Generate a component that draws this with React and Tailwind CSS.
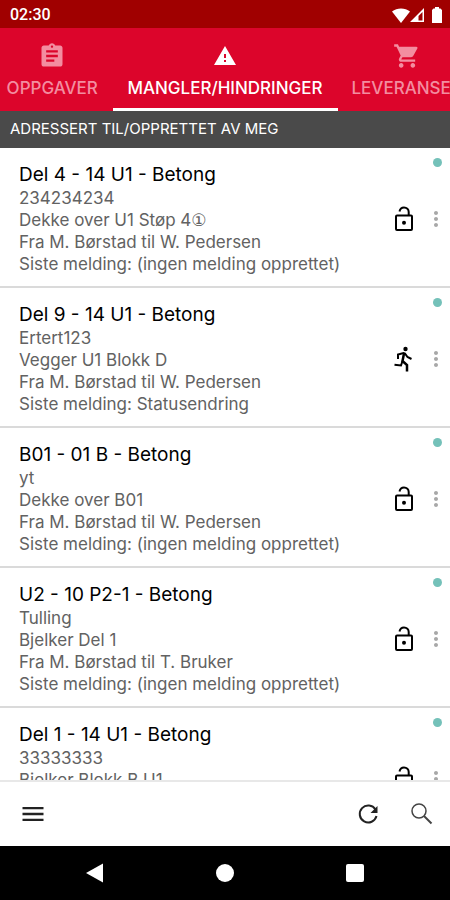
import { MdAssignment, MdWarning, MdShoppingCart, MdMoreVert, MdMenu } from 'react-icons/md'

const TABS = [
  { id: 'tasks', label: 'OPPGAVER', icon: MdAssignment, width: 'w-1/4 pr-2', iconSize: 'h-7 w-7' },
  { id: 'issues', label: 'MANGLER/HINDRINGER', icon: MdWarning, width: 'w-1/2', iconSize: 'h-6 w-6' },
  { id: 'deliveries', label: 'LEVERANSER', icon: MdShoppingCart, width: 'px-3.5', iconSize: 'h-7 w-7' },
]

const ISSUES = [
  {
    title: 'Del 4 - 14 U1 - Betong',
    status: 'open',
    lines: [
      '234234234',
      <>Dekke over U1 Støp 4<span className="font-['DejaVu_Sans'] leading-none">①</span></>,
      'Fra M. Børstad til W. Pedersen',
      'Siste melding: (ingen melding opprettet)',
    ],
  },
  {
    title: 'Del 9 - 14 U1 - Betong',
    status: 'running',
    lines: ['Ertert123', 'Vegger U1 Blokk D', 'Fra M. Børstad til W. Pedersen', 'Siste melding: Statusendring'],
  },
  {
    title: 'B01 - 01 B - Betong',
    status: 'open',
    lines: ['yt', 'Dekke over B01', 'Fra M. Børstad til W. Pedersen', 'Siste melding: (ingen melding opprettet)'],
  },
  {
    title: 'U2 - 10 P2-1 - Betong',
    status: 'open',
    lines: ['Tulling', 'Bjelker Del 1', 'Fra M. Børstad til T. Bruker', 'Siste melding: (ingen melding opprettet)'],
  },
  {
    title: 'Del 1 - 14 U1 - Betong',
    status: 'open',
    lines: ['33333333', 'Bjelker Blokk B U1'],
  },
]

function UnlockIcon() {
  return (
    <svg viewBox="0 0 24 28" className="h-7 w-6" fill="none" stroke="currentColor" strokeWidth="2">
      <rect x="4" y="10.5" width="16" height="14.5" rx="1" />
      <path d="M7.500 6.500C8 4 9.800 2.500 12 2.500c2.700 0 4.700 2 4.700 4.500v3.500" />
      <circle cx="12" cy="17.700" r="2" fill="currentColor" stroke="none" />
    </svg>
  )
}

function RunnerIcon() {
  return (
    <svg viewBox="0 0 24 28" className="h-7 w-6" fill="none" stroke="currentColor" strokeWidth="2">
      <circle cx="13.500" cy="4" r="2.200" fill="currentColor" stroke="none" />
      <path d="M6 14V9.500l5.500-1.500 1.500.5 2.500 3.500 4 2" />
      <path d="M12 8.500L10.500 16l4.500 4v6.500" strokeWidth="2.500" />
      <path d="M10.500 16L9 20.500l-6.500-.8" />
    </svg>
  )
}

function RefreshIcon() {
  return (
    <svg viewBox="0 0 24 24" className="h-6 w-6" fill="none" stroke="currentColor" strokeWidth="2">
      <path d="M19.500 7.500A8.500 8.500 0 1 0 20.500 14" />
      <path d="M21.500 4v7h-7z" fill="currentColor" stroke="none" />
    </svg>
  )
}

function SearchIcon() {
  return (
    <svg viewBox="0 0 24 24" className="h-6 w-6" fill="none" stroke="currentColor">
      <circle cx="9" cy="9" r="7" strokeWidth="1.500" />
      <path d="M14 14l7.500 7.500" strokeWidth="2" />
    </svg>
  )
}

function StatusBar() {
  return (
    <div className="flex h-7 shrink-0 items-center justify-between bg-[#a00000] pt-0.5 pr-2 pl-2.5 text-white">
      <span className="font-[Roboto] text-base font-medium">02:30</span>
      <div className="flex items-center" aria-hidden="true">
        <svg viewBox="0 0 18 15" className="h-[15px] w-[18px]" fill="currentColor">
          <path d="M0 3.500C5 -.6 13 -.6 18 3.500L9 15z" />
        </svg>
        <svg viewBox="0 0 14 14" className="mr-2 h-3.5 w-3.5" fill="currentColor">
          <path fillRule="evenodd" d="M14 0v14H0zM12.500 4L8.500 8v4.500h4z" />
        </svg>
        <svg viewBox="0 0 10 16" className="h-4 w-2.5" fill="currentColor">
          <path d="M3 0h4v1.500h1.500L10 3v13H0V3l1.500-1.500H3z" />
        </svg>
      </div>
    </div>
  )
}

function Tab({ tab, active }) {
  const Icon = tab.icon
  return (
    <button
      type="button"
      role="tab"
      aria-selected={active}
      className={`flex shrink-0 flex-col items-center border-b-3 pt-3 ${tab.width} ${
        active ? 'border-white text-white' : 'border-transparent text-[#f38da0]'
      }`}
    >
      <span className="flex h-8 items-center">
        <Icon className={tab.iconSize} />
      </span>
      <span className="mt-1 text-[17px] leading-6 font-medium whitespace-nowrap">{tab.label}</span>
    </button>
  )
}

function IssueRow({ issue }) {
  return (
    <li className="relative flex h-[140px] shrink-0 border-b-2 border-[#dadada] pr-0.5 pl-[19px]">
      <div className="min-w-0 flex-1 pt-3.5">
        <h2 className="truncate text-[19px] leading-[25px] text-black">{issue.title}</h2>
        {issue.lines.map((line, i) => (
          <p key={i} className="truncate text-[17px] leading-[22px] text-[#626262]">{line}</p>
        ))}
      </div>
      <div className="flex items-center gap-2 pt-1 text-black">
        {issue.status === 'running' ? <RunnerIcon /> : <UnlockIcon />}
        <button type="button" aria-label="Flere valg" className="text-[#a8a8a8]">
          <MdMoreVert className="h-6 w-6" />
        </button>
      </div>
      <span className="absolute top-2.5 right-2 h-[9px] w-[9px] rounded-full bg-[#74c1b9]" />
    </li>
  )
}

export default function App() {
  return (
    <div className="flex h-screen flex-col overflow-hidden bg-white font-[Inter,sans-serif]">
      <StatusBar />
      <div role="tablist" className="flex h-[83px] shrink-0 overflow-hidden bg-[#dc052b]">
        {TABS.map((tab) => (
          <Tab key={tab.id} tab={tab} active={tab.id === 'issues'} />
        ))}
      </div>
      <h1 className="flex h-[37px] shrink-0 items-center bg-[#4a4a4a] pl-2.5 text-[15px] text-white">
        ADRESSERT TIL/OPPRETTET AV MEG
      </h1>
      <ul className="flex min-h-0 flex-1 flex-col overflow-hidden">
        {ISSUES.map((issue) => (
          <IssueRow key={issue.title} issue={issue} />
        ))}
      </ul>
      <div className="flex h-[66px] shrink-0 items-center border-t-2 border-[#e8e8e8] pr-4 pl-[19px] text-[#222]">
        <button type="button" aria-label="Meny">
          <MdMenu className="h-7 w-7" />
        </button>
        <div className="ml-auto flex gap-[30px]">
          <button type="button" aria-label="Oppdater">
            <RefreshIcon />
          </button>
          <button type="button" aria-label="Søk" className="text-[#444]">
            <SearchIcon />
          </button>
        </div>
      </div>
      <div className="grid h-[54px] shrink-0 grid-cols-3 place-items-center bg-black px-[30px] text-white">
        <button type="button" aria-label="Tilbake">
          <svg viewBox="0 0 20 20" className="h-5 w-5" fill="currentColor">
            <path d="M18 .5v19L1 10z" />
          </svg>
        </button>
        <button type="button" aria-label="Hjem" className="h-[18px] w-[18px] rounded-full bg-white" />
        <button type="button" aria-label="Oversikt" className="h-[18px] w-[18px] rounded-xs bg-white" />
      </div>
    </div>
  )
}
